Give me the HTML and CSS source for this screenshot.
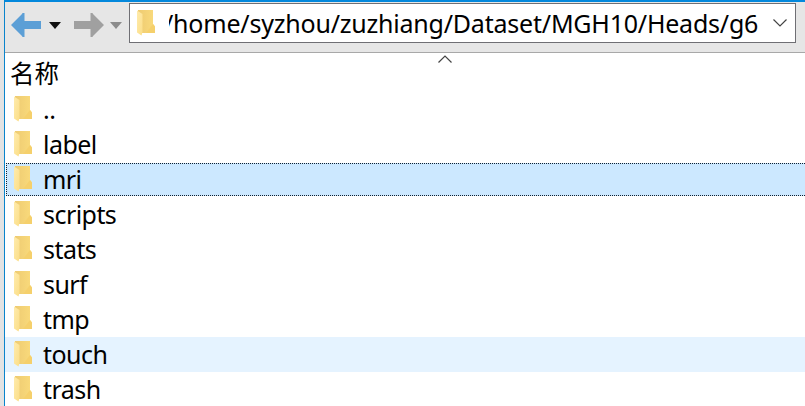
FILE: index.html
```html
<!DOCTYPE html>
<html lang="zh-CN">
<head>
  <meta charset="UTF-8">
  <title>/home/syzhou/zuzhiang/Dataset/MGH10/Heads/g6</title>
  <link rel="stylesheet" href="styles.css">
</head>
<body>
  <!-- 文件夹图标 -->
  <svg class="defs" width="0" height="0">
    <defs>
      <linearGradient id="front" x1="0" y1="0" x2="1" y2="1">
        <stop offset="0" stop-color="#ffebac"/>
        <stop offset="1" stop-color="#fbde88"/>
      </linearGradient>
      <linearGradient id="back" x1="0" y1="0" x2="1" y2="0">
        <stop offset="0" stop-color="#eecb72"/>
        <stop offset="1" stop-color="#fadb7c"/>
      </linearGradient>
    </defs>
    <symbol id="folder" viewBox="0 0 18 26">
      <path d="M1 0H16V14L18 16.500V23H4L1 21Z" fill="url(#back)"/>
      <path d="M16 14L18 16.500V23H9Z" fill="#f5d06c"/>
      <path d="M0 0.500L5.500 4V22L4.500 25.500L0 22.500Z" fill="url(#front)"/>
    </symbol>
  </svg>

  <div class="window">
    <div class="toolbar">
      <svg class="arrow back" width="30" height="24" viewBox="0 0 30 24"><path d="M0 12L11 1L11.500 0H13.500V8H30V16H13.500V24H11.500L11 23Z"/></svg>
      <svg class="caret" width="12" height="7" viewBox="0 0 12 7"><path d="M0 0H12L6 7Z"/></svg>
      <svg class="arrow forward" width="30" height="24" viewBox="0 0 30 24"><path d="M30 12L19 1L18.500 0H16.500V8H0V16H16.500V24H18.500L19 23Z"/></svg>
      <svg class="caret disabled" width="12" height="7" viewBox="0 0 12 7"><path d="M0 0H12L6 7Z"/></svg>
      <div class="path-box">
        <svg class="folder"><use href="#folder"/></svg>
        <div class="path"><span>/home/syzhou/zuzhiang/Dataset/MGH10/Heads/g6</span></div>
        <svg class="chevron" width="14" height="8" viewBox="0 0 14 8"><path d="M0.500 0.500L7 7L13.500 0.500"/></svg>
      </div>
    </div>

    <div class="panel">
      <div class="header">
        <span>名称</span>
        <svg class="sort" width="14" height="8" viewBox="0 0 14 8"><path d="M0.500 7.500L7 1L13.500 7.500"/></svg>
      </div>
      <div class="row"><svg class="folder"><use href="#folder"/></svg><span>..</span></div>
      <div class="row"><svg class="folder"><use href="#folder"/></svg><span>label</span></div>
      <div class="row selected"><svg class="folder"><use href="#folder"/></svg><span>mri</span></div>
      <div class="row"><svg class="folder"><use href="#folder"/></svg><span>scripts</span></div>
      <div class="row"><svg class="folder"><use href="#folder"/></svg><span>stats</span></div>
      <div class="row"><svg class="folder"><use href="#folder"/></svg><span>surf</span></div>
      <div class="row"><svg class="folder"><use href="#folder"/></svg><span>tmp</span></div>
      <div class="row hover"><svg class="folder"><use href="#folder"/></svg><span>touch</span></div>
      <div class="row"><svg class="folder"><use href="#folder"/></svg><span>trash</span></div>
    </div>
  </div>
</body>
</html>
```
FILE: styles.css
```css
* {
  margin: 0;
  padding: 0;
  box-sizing: border-box;
}

body {
  width: 805px;
  height: 406px;
  padding-left: 4px;
  background: #e3e3e3;
  overflow: hidden;
  font-family: "Noto Sans", "Noto Sans CJK SC", sans-serif;
  font-size: 25px;
  color: #000;
}

.defs {
  display: block;
}

.window {
  height: 406px;
  border-left: 1px solid #0a84cc;
  border-top: 2px solid #0388dc;
  overflow: hidden;
}

.toolbar {
  height: 51px;
  display: flex;
  align-items: flex-start;
  padding: 1px 0 0 6px;
  background: #e6e6e6;
  border-bottom: 1px solid #a8a8a8;
}

.arrow {
  margin-top: 10px;
}

.back {
  fill: #5c9fd6;
}

.forward {
  margin-left: 13px;
  fill: #a0a0a0;
}

.caret {
  margin: 19px 0 0 8px;
  fill: #111;
}

.caret.disabled {
  margin-left: 6px;
  fill: #8c8c8c;
}

.path-box {
  width: 667px;
  height: 40px;
  margin-left: 7px;
  display: flex;
  align-items: center;
  padding-left: 7px;
  background: #fff;
  border: 1px solid #6f6f74;
}

.folder {
  flex: none;
  width: 18px;
  height: 26px;
}

.path {
  width: 592px;
  margin-left: 14px;
  overflow: hidden;
  white-space: nowrap;
  line-height: 36px;
}

.path span {
  margin-left: -5px;
  letter-spacing: -0.21px;
}

.chevron {
  margin-left: 12px;
}

.chevron path,
.sort path {
  fill: none;
  stroke: #444;
  stroke-width: 1.2;
}

.panel {
  height: 353px;
  background: #fff;
  overflow: hidden;
}

.header {
  height: 39px;
  display: flex;
  align-items: flex-start;
  padding-left: 5px;
}

.header span {
  width: 50px;
  font-size: 24.5px;
  line-height: 42px;
}

.sort {
  margin: 2px 0 0 378px;
}

.row {
  height: 35px;
  display: flex;
  align-items: center;
  padding-left: 9px;
  line-height: 35px;
}

.row .folder {
  margin-bottom: 1px;
}

.row span {
  margin-left: 11px;
  letter-spacing: -0.55px;
}

/* 选中行的虚线框 */
.selected {
  height: 33px;
  margin: 1px 0 1px 1px;
  padding: 0 0 0 7px;
  background: #cce8ff;
  border: 1px dotted #102030;
  border-right: none;
}

.hover {
  background: #e5f3ff;
}
```
